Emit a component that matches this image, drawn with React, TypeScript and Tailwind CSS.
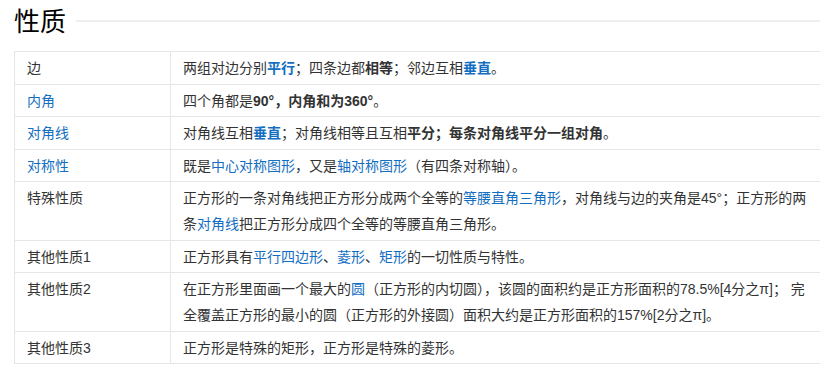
import React from "react";

const L = ({ children, b }: { children: React.ReactNode; b?: boolean }) => (
  <span className={"text-[#136ec2]" + (b ? " font-bold" : "")}>{children}</span>
);
const B = ({ children }: { children: React.ReactNode }) => <span className="font-bold">{children}</span>;

const rows: [React.ReactNode, React.ReactNode][] = [
  ["边", <>两组对边分别<L b>平行</L>；四条边都<B>相等</B>；邻边互相<L b>垂直</L>。</>],
  [<L>内角</L>, <>四个角都是<B>90°，内角和为360°</B>。</>],
  [<L>对角线</L>, <>对角线互相<L b>垂直</L>；对角线相等且互相<B>平分；每条对角线平分一组对角</B>。</>],
  [<L>对称性</L>, <>既是<L>中心对称图形</L>，又是<L>轴对称图形</L>（有四条对称轴）。</>],
  [
    "特殊性质",
    <>
      正方形的一条对角线把正方形分成两个全等的<L>等腰直角三角形</L>，对角线与边的夹角是45°；正方形的两
      <br />条<L>对角线</L>把正方形分成四个全等的等腰直角三角形。
    </>,
  ],
  ["其他性质1", <>正方形具有<L>平行四边形</L>、<L>菱形</L>、<L>矩形</L>的一切性质与特性。</>],
  [
    "其他性质2",
    <>
      在正方形里面画一个最大的<L>圆</L>（正方形的内切圆），该圆的面积约是正方形面积的78.5%[4分之π]； 完
      <br />全覆盖正方形的最小的圆（正方形的外接圆）面积大约是正方形面积的157%[2分之π]。
    </>,
  ],
  ["其他性质3", <>正方形是特殊的矩形，正方形是特殊的菱形。</>],
];

export default function App() {
  return (
    <div
      className="w-[820px] h-[379px] overflow-hidden bg-white text-[#333]"
      style={{ fontFamily: '"Liberation Sans", Arial, "Noto Sans CJK SC", sans-serif' }}
    >
      <div className="flex items-center pl-[14px] pt-[7px] h-[37px]">
        <h2 className="text-[26px] leading-[30px] text-black font-normal whitespace-nowrap">性质</h2>
        <div className="flex-1 h-[2px] bg-[#eeeeee] ml-[10px] mt-[-3px]" />
      </div>
      <table className="ml-[14px] mt-[14px] w-[818px] border-collapse text-[14px] leading-[26px]">
        <tbody>
          {rows.map(([k, v], i) => (
            <tr key={i}>
              <td className="w-[156px] border border-[#e6e6e6] pl-[12px] pr-[12px] pt-[3px] pb-[2.5px] align-top whitespace-nowrap">
                {k}
              </td>
              <td className="border border-[#e6e6e6] pl-[12px] pr-[12px] pt-[3px] pb-[2.5px] align-top whitespace-nowrap">
                {v}
              </td>
            </tr>
          ))}
        </tbody>
      </table>
    </div>
  );
}
